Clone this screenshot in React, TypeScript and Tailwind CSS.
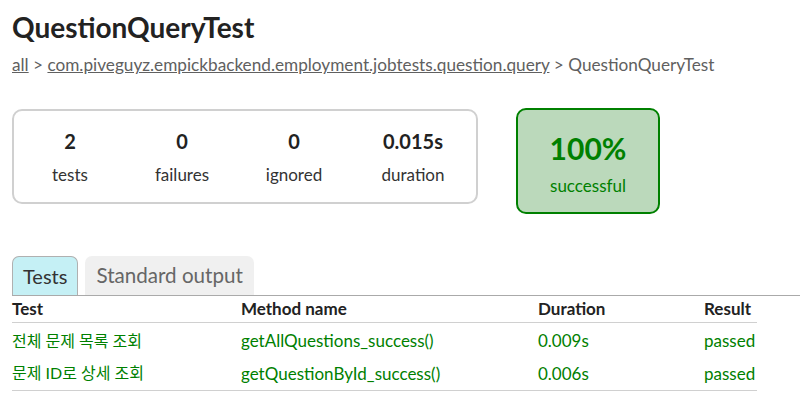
import React from "react";

const font = { fontFamily: '"Lato", "Noto Sans CJK KR", sans-serif' };

export default function App() {
  return (
    <div className="w-[800px] h-[404px] overflow-hidden bg-white text-[#222]" style={font}>
      <div className="pl-[12px] pt-[9px]">
        <h1 className="text-[28px] leading-[36px] font-bold m-0">QuestionQueryTest</h1>
        <div className="mt-[10px] text-[17.2px] leading-[20px] text-[#606060]">
          <a className="underline text-[#606060]">all</a> &gt;{" "}
          <a className="underline text-[#606060]">com.piveguyz.empickbackend.employment.jobtests.question.query</a> &gt;{" "}
          QuestionQueryTest
        </div>
        <div className="mt-[34px] flex items-start">
          <div className="flex border-2 border-[#d0d0d0] rounded-[10px] w-[466px] h-[95px]">
            {[
              ["2", "tests", "w-[112px]"],
              ["0", "failures", "w-[112px]"],
              ["0", "ignored", "w-[112px]"],
              ["0.015s", "duration", "w-[126px]"],
            ].map(([n, l, w]) => (
              <div key={l} className={`${w} text-center pt-[18px]`}>
                <div className="text-[20px] leading-[24px] font-bold">{n}</div>
                <div className="mt-[12px] text-[17px] leading-[20px] text-[#333]">{l}</div>
              </div>
            ))}
          </div>
          <div className="ml-[38px] mt-[-1px] w-[144px] h-[106px] border-2 border-[#008000] bg-[#bbd9bb] rounded-[10px] text-center text-[#008000] pt-[20px]">
            <div className="text-[30px] leading-[36px] font-bold">100%</div>
            <div className="mt-[10px] text-[17px] leading-[20px]">successful</div>
          </div>
        </div>
        <div className="mt-[42px] flex items-end border-b border-[#aaa] h-[40px]">
          <div className="h-[39px] px-[10px] pt-[6px] rounded-t-[7px] border border-b-0 border-[#b0b0b0] bg-[#c5f0f5] text-[20px] leading-[26px] text-[#333]">
            Tests
          </div>
          <div className="ml-[7px] h-[39px] px-[11px] pt-[6px] rounded-t-[7px] bg-[#f0f0f0] text-[20.6px] leading-[26px] text-[#666]">
            Standard output
          </div>
        </div>
        <table className="border-collapse text-[17px]">
          <thead>
            <tr className="border-b border-[#d0d0d0]">
              <th className="w-[229px] text-left font-bold h-[26px] p-0">Test</th>
              <th className="w-[297px] text-left font-bold p-0">Method name</th>
              <th className="w-[166px] text-left font-bold p-0">Duration</th>
              <th className="w-[53px] text-left font-bold p-0">Result</th>
            </tr>
          </thead>
          <tbody className="text-[#008000]">
            <tr>
              <td className="h-[36px] p-0 pt-[1px]"><span className="text-[16px]">전체 문제 목록 조회</span></td>
              <td className="p-0">getAllQuestions_success()</td>
              <td className="p-0">0.009s</td>
              <td className="p-0">passed</td>
            </tr>
            <tr className="border-b border-[#d0d0d0]">
              <td className="h-[32px] p-0 pb-[2px]"><span className="text-[16px]">문제 ID로 상세 조회</span></td>
              <td className="p-0">getQuestionById_success()</td>
              <td className="p-0">0.006s</td>
              <td className="p-0">passed</td>
            </tr>
          </tbody>
        </table>
      </div>
    </div>
  );
}
